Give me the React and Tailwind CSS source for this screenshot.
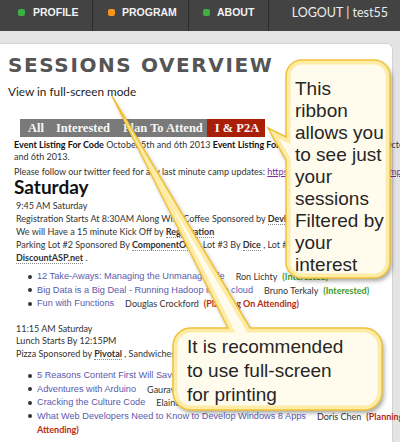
import React from "react";

const P1 =
  "M302,60 H374 A16,16 0 0 1 390,76 V262 A16,16 0 0 1 374,278 H302 A16,16 0 0 1 286,262 V160 L268,128 L286,137 V76 A16,16 0 0 1 302,60 Z";
const P2 =
  "M191,328 H228 L112,96 L250,328 H364 A18,18 0 0 1 382,346 V392 A18,18 0 0 1 364,410 H191 A18,18 0 0 1 173,392 V346 A18,18 0 0 1 191,328 Z";

function Dot({ cls }) {
  return <span className={"w-[7px] h-[7px] rounded-[2px] shrink-0 " + cls} />;
}

function Sp({ children }) {
  return (
    <span className="font-bold text-[#333] border-b border-dotted border-[#8a8a8a]">
      {children}
    </span>
  );
}

function Item({ title, speaker, status, green }) {
  return (
    <div className="flex items-center whitespace-nowrap h-[13.5px] leading-[13.5px]">
      <span className="w-[4px] h-[4px] rounded-full bg-[#333] ml-[28px] mr-[5px] shrink-0" />
      <span className="font-['Liberation_Sans',sans-serif] text-[9.2px] text-[#5a5aad]">
        {title}
      </span>
      <span className="ml-[11px] text-[#333]">{speaker}</span>
      <span
        className={
          "ml-[5px] font-bold " + (green ? "text-[#3d9b2a]" : "text-[#b82c12]")
        }
      >
        {status}
      </span>
    </div>
  );
}

export default function App() {
  return (
    <div className="relative w-[400px] h-[442px] overflow-hidden bg-[#e4e4e4] font-['Lato',sans-serif]">
      {/* nav */}
      <div className="h-[31px] bg-[#434343] flex items-stretch font-['Liberation_Sans',sans-serif] font-bold text-[10.5px] text-[#f2f2f2]">
        <div className="w-[93px] flex items-center pl-[18px] gap-[8px] border-r border-[#2c2c2c] pb-[6px]">
          <Dot cls="bg-[#3cb043]" />
          PROFILE
        </div>
        <div className="w-[96px] flex items-center pl-[15px] gap-[7px] border-r border-[#2c2c2c] pb-[6px]">
          <Dot cls="bg-[#f7941d]" />
          PROGRAM
        </div>
        <div className="w-[80px] flex items-center pl-[14px] gap-[7px] border-r border-[#2c2c2c] pb-[6px]">
          <Dot cls="bg-[#3cb043]" />
          ABOUT
        </div>
        <div className="flex-1 flex items-center justify-end pr-[12px] pb-[4px] font-['Lato',sans-serif] font-normal text-[12.5px] text-[#ececec]">
          LOGOUT | test55
        </div>
      </div>
      <div className="h-[12px]" />
      {/* panel */}
      <div className="w-[393px] h-[400px] bg-white rounded-tr-[6px] border-t border-r border-[#d2d2d2] pt-[9px] text-[9px] text-[#333]">
        <div className="pl-[8px] h-[24px] leading-[24px] font-['DejaVu_Sans',sans-serif] font-bold text-[20px] tracking-[1.6px] text-[#555] whitespace-nowrap">
          SESSIONS OVERVIEW
        </div>
        <div className="pl-[8px] mt-[7px] h-[16px] leading-[16px] text-[11.8px] text-[#222]">
          View in full-screen mode
        </div>
        <div className="ml-[20px] mt-[19px] w-[245px] h-[18px] bg-[#7a7a7a] flex items-stretch font-['Liberation_Serif',serif] font-bold text-[12.5px] text-[#f7f7f7] leading-[18px] whitespace-nowrap">
          <span className="pl-[8px] pr-[12px]">All</span>
          <span className="pr-[13px]">Interested</span>
          <span className="pr-[4px]">Plan To Attend</span>
          <span className="flex-1 bg-[#a81e06] pl-[8px]">I &amp; P2A</span>
        </div>
        <div className="pl-[14px] mt-[2px] whitespace-nowrap leading-[12px]">
          <div className="h-[12px]">
            <b className="text-[#111]">Event Listing For Code</b> October 5th and 6th 2013{" "}
            <b className="text-[#111]">Event Listing For Silicon Valley Code Camp</b> October 5th
          </div>
          <div className="h-[12px]">and 6th 2013.</div>
          <div className="h-[12px] mt-[3px]">
            Please follow our twitter feed for any last minute camp updates:{" "}
            <span className="text-[#7a2f9a] underline">https://twitter.com/sv_code_camp</span>
          </div>
        </div>
        <div className="pl-[14px] mt-[-1px] h-[20px] leading-[20px] text-[19px] font-bold text-[#111]">
          Saturday
        </div>
        <div className="pl-[16px] mt-[2px] whitespace-nowrap leading-[13px]">
          <div className="h-[13px]">9:45 AM Saturday</div>
          <div className="h-[13px]">
            Registration Starts At 8:30AM Along With Coffee Sponsored by <Sp>DevExpress</Sp>
          </div>
          <div className="h-[13px]">
            We will Have a 15 minute Kick Off by <Sp>Registration</Sp>
          </div>
          <div className="h-[13px]">
            Parking Lot #2 Sponsored By <Sp>ComponentOne</Sp> , Lot #3 By <Sp>Dice</Sp> , Lot #5 By{" "}
            <Sp>Intuit</Sp> and
          </div>
          <div className="h-[13px]">
            <Sp>DiscountASP.net</Sp> .
          </div>
        </div>
        <div className="mt-[6px]">
          <Item title="12 Take-Aways: Managing the Unmanageable" speaker="Ron Lichty" status="(Interested)" green />
          <Item title="Big Data is a Big Deal - Running Hadoop in the cloud" speaker="Bruno Terkaly" status="(Interested)" green />
          <Item title="Fun with Functions" speaker="Douglas Crockford" status="(Planning On Attending)" />
        </div>
        <div className="pl-[16px] mt-[12px] whitespace-nowrap leading-[12.5px]">
          <div className="h-[12.5px]">11:15 AM Saturday</div>
          <div className="h-[12.5px]">Lunch Starts By 12:15PM</div>
          <div className="h-[12.5px]">
            Pizza Sponsored by <Sp>Pivotal</Sp> , Sandwiches Sponsored by <Sp>Microsoft</Sp>
          </div>
        </div>
        <div className="mt-[9px]">
          <Item title="5 Reasons Content First Will Save Your Project" speaker="Ben Callahan" status="(Interested)" green />
          <Item title="Adventures with Arduino" speaker="Gaurav Gupta" status="(Interested)" green />
          <Item title="Cracking the Culture Code" speaker="Elaine Chang" status="(Interested)" green />
          <div className="flex items-center whitespace-nowrap h-[13px] leading-[13px]">
            <span className="w-[4px] h-[4px] rounded-full bg-[#333] ml-[28px] mr-[5px] shrink-0" />
            <span className="font-['Liberation_Sans',sans-serif] text-[9.2px] text-[#5a5aad]">
              What Web Developers Need to Know to Develop Windows 8 Apps
            </span>
            <span className="ml-[11px] text-[#333]">Doris Chen</span>
            <span className="ml-[5px] font-bold text-[#b82c12]">(Planning On</span>
          </div>
          <div className="pl-[37px] h-[13px] leading-[13px] font-bold text-[#b82c12]">Attending)</div>
        </div>
      </div>

      {/* callouts */}
      <svg className="absolute left-0 top-0 pointer-events-none" width="400" height="442" viewBox="0 0 400 442">
        <defs>
          <filter id="sh" x="-20%" y="-20%" width="140%" height="140%">
            <feDropShadow dx="2" dy="3" stdDeviation="2" floodColor="#000" floodOpacity="0.35" />
          </filter>
          <clipPath id="c1">
            <path d={P1} />
          </clipPath>
          <clipPath id="c2">
            <path d={P2} />
          </clipPath>
        </defs>
        <g>
          <path d={P1} fill="#fffcee" filter="url(#sh)" />
          <path d={P1} fill="none" stroke="#fdeba6" strokeWidth="9" clipPath="url(#c1)" />
          <path d={P1} fill="none" stroke="#f0c236" strokeWidth="1.5" />
        </g>
        <g>
          <path d={P2} fill="#fffcee" filter="url(#sh)" />
          <path d={P2} fill="none" stroke="#fdeba6" strokeWidth="9" clipPath="url(#c2)" />
          <path d={P2} fill="none" stroke="#f0c236" strokeWidth="1.5" />
        </g>
      </svg>
      <div className="absolute left-[295px] top-[78px] font-['Liberation_Sans',sans-serif] text-[19px] leading-[22px] text-[#262626]">
        <div>This</div>
        <div>ribbon</div>
        <div>allows you</div>
        <div>to see just</div>
        <div>your</div>
        <div>sessions</div>
        <div>Filtered by</div>
        <div>your</div>
        <div>interest</div>
      </div>
      <div className="absolute left-[187px] top-[335px] font-['Liberation_Sans',sans-serif] text-[19px] leading-[24px] text-[#262626] whitespace-nowrap">
        <div>It is recommended</div>
        <div>to use full-screen</div>
        <div>for printing</div>
      </div>
    </div>
  );
}
